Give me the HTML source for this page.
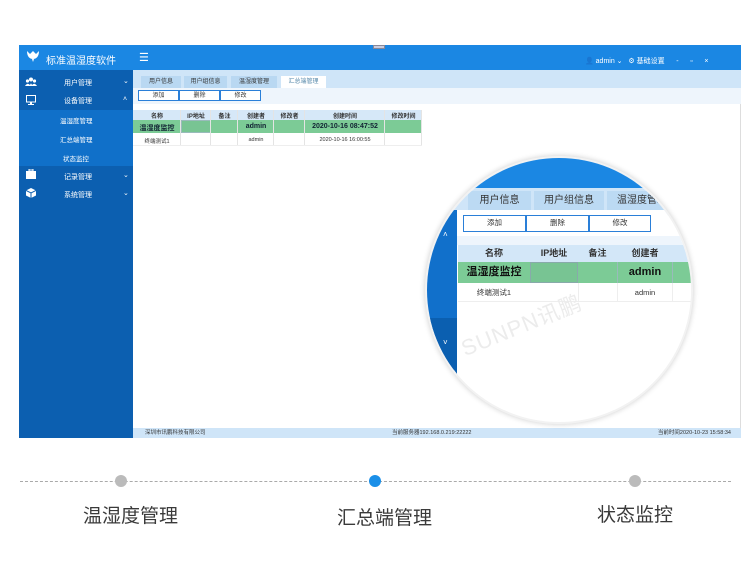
<!DOCTYPE html>
<html><head><meta charset="utf-8"><style>
*{margin:0;padding:0;box-sizing:border-box}
body{width:750px;height:563px;background:#fff;font-family:"Liberation Sans","Noto Sans CJK SC",sans-serif;position:relative;overflow:hidden;color:#333}
.a{position:absolute}
.t{font-size:6px;text-align:center}
.c{border-right:1px solid #e4e4e4;height:100%}
</style></head><body>
<!-- app -->
<div class="a" style="left:19px;top:45px;width:722px;height:393px;background:#fff;border-right:1px solid #ddd"></div>
<div class="a" style="left:19px;top:45px;width:722px;height:25px;background:#1b87e3"></div>
<div class="a" style="left:373px;top:45px;width:12px;height:4px;background:#ccd;border:1px solid #889"></div>
<svg class="a" style="left:26px;top:50px" width="14" height="13" viewBox="0 0 14 13"><path d="M1 1 C1 7 4 9 7 9 C10 9 13 7 13 1 L10 4 L7 1 L4 4 Z M6 9 L7 12 L8 9Z" fill="#fff"/></svg>
<div class="a" style="left:46px;top:52px;color:#fff;font-size:10px">标准温湿度软件</div>
<div class="a" style="left:139px;top:51px;color:#fff;font-size:11px">☰</div>
<div class="a" style="left:585px;top:56px;color:#fff;font-size:7px">👤 admin ⌄ &nbsp; ⚙ 基础设置 &nbsp;&nbsp;&nbsp;&nbsp; - &nbsp;&nbsp;&nbsp;&nbsp; ▫ &nbsp;&nbsp;&nbsp;&nbsp; ×</div>
<!-- sidebar -->
<div class="a" style="left:19px;top:70px;width:114px;height:368px;background:#0c5fb0"></div>
<div class="a" style="left:19px;top:110px;width:114px;height:56px;background:#1070c9"></div>
<svg class="a" style="left:25px;top:77px" width="12" height="9"><circle cx="6" cy="2.5" r="2" fill="#fff"/><circle cx="2.5" cy="4" r="1.6" fill="#fff"/><circle cx="9.5" cy="4" r="1.6" fill="#fff"/><path d="M0 9 Q2.5 5 5 8 Q6 5 7 8 Q9.5 5 12 9Z" fill="#fff"/></svg>
<svg class="a" style="left:26px;top:95px" width="10" height="10"><rect x="0.5" y="0.5" width="9" height="6.5" fill="none" stroke="#fff"/><rect x="4" y="7" width="2" height="2" fill="#fff"/><rect x="2" y="9" width="6" height="1" fill="#fff"/></svg>
<svg class="a" style="left:26px;top:169px" width="10" height="10"><rect x="0" y="2" width="10" height="8" fill="#fff"/><rect x="3" y="0" width="4" height="2" fill="none" stroke="#fff"/></svg>
<svg class="a" style="left:26px;top:188px" width="10" height="10"><path d="M5 0 L10 2.5 V7.5 L5 10 L0 7.5 V2.5Z" fill="#fff"/><path d="M5 5 V10 M0 2.5 L5 5 L10 2.5" stroke="#0c5fb0" fill="none"/></svg>
<div class="a" style="left:19px;top:74px;width:114px;height:16px;color:#fff;font-size:7px"><span class="a" style="left:45px;top:4px">用户管理</span><span class="a" style="left:104px;top:3px">⌄</span></div>
<div class="a" style="left:19px;top:92px;width:114px;height:16px;color:#fff;font-size:7px"><span class="a" style="left:45px;top:4px">设备管理</span><span class="a" style="left:104px;top:4px">˄</span></div>
<div class="a" style="left:60px;top:115px;color:#fff;font-size:6.5px">温湿度管理</div>
<div class="a" style="left:60px;top:134px;color:#fff;font-size:6.5px">汇总端管理</div>
<div class="a" style="left:63px;top:153px;color:#fff;font-size:6.5px">状态监控</div>
<div class="a" style="left:19px;top:170px;width:114px;height:16px;color:#fff;font-size:7px"><span class="a" style="left:45px;top:2px">记录管理</span><span class="a" style="left:104px;top:1px">⌄</span></div>
<div class="a" style="left:19px;top:188px;width:114px;height:16px;color:#fff;font-size:7px"><span class="a" style="left:45px;top:2px">系统管理</span><span class="a" style="left:104px;top:1px">⌄</span></div>
<!-- tabs -->
<div class="a" style="left:133px;top:70px;width:608px;height:18px;background:#cfe5f8"></div>
<div class="a t" style="left:141px;top:76px;width:40px;height:12px;background:#b9d8f2;line-height:12px">用户信息</div>
<div class="a t" style="left:184px;top:76px;width:43px;height:12px;background:#b9d8f2;line-height:12px">用户组信息</div>
<div class="a t" style="left:231px;top:76px;width:46px;height:12px;background:#b9d8f2;line-height:12px">温湿度管理</div>
<div class="a t" style="left:281px;top:76px;width:45px;height:12px;background:#fff;line-height:12px;color:#58a">汇总端管理</div>
<div class="a" style="left:133px;top:88px;width:608px;height:16px;background:#eef5fc"></div>
<div class="a t" style="left:138px;top:90px;width:41px;height:11px;border:1px solid #2a7fd8;background:#fff;line-height:10px">添加</div>
<div class="a t" style="left:179px;top:90px;width:41px;height:11px;border:1px solid #2a7fd8;background:#fff;line-height:10px">删除</div>
<div class="a t" style="left:220px;top:90px;width:41px;height:11px;border:1px solid #2a7fd8;background:#fff;line-height:10px">修改</div>
<!-- table -->
<div class="a" style="left:133px;top:110px;width:289px;height:10px;background:#d6e8f8"></div>
<div class="a" style="left:133px;top:120px;width:289px;height:13px;background:#7ccb96"></div>
<div class="a" style="left:181px;top:120px;width:30px;height:13px;background:#78c493;border:1px solid #9bb"></div>
<div class="a" style="left:133px;top:110px;width:289px;height:36px;border-bottom:1px solid #eee;display:flex">
 <div class="c" style="width:48px"></div><div class="c" style="width:30px"></div><div class="c" style="width:27px"></div><div class="c" style="width:36px"></div><div class="c" style="width:31px"></div><div class="c" style="width:80px"></div><div class="c" style="width:37px"></div></div>
<div class="a t" style="left:133px;top:111px;width:48px;font-weight:bold">名称</div>
<div class="a t" style="left:181px;top:111px;width:30px;font-weight:bold">IP地址</div>
<div class="a t" style="left:211px;top:111px;width:27px;font-weight:bold">备注</div>
<div class="a t" style="left:238px;top:111px;width:36px;font-weight:bold">创建者</div>
<div class="a t" style="left:274px;top:111px;width:31px;font-weight:bold">修改者</div>
<div class="a t" style="left:305px;top:111px;width:80px;font-weight:bold">创建时间</div>
<div class="a t" style="left:385px;top:111px;width:37px;font-weight:bold">修改时间</div>
<div class="a t" style="left:133px;top:123px;width:48px;font-size:7px;font-weight:bold;color:#123">温湿度监控</div>
<div class="a t" style="left:238px;top:123px;width:36px;font-size:7px;font-weight:bold;color:#123">admin</div>
<div class="a t" style="left:305px;top:123px;width:80px;font-size:7px;font-weight:bold;color:#123">2020-10-16 08:47:52</div>
<div class="a t" style="left:133px;top:137px;width:48px;font-size:5.5px">终端测试1</div>
<div class="a t" style="left:238px;top:137px;width:36px;font-size:5.5px">admin</div>
<div class="a t" style="left:305px;top:137px;width:80px;font-size:5.5px">2020-10-16 16:00:55</div>
<!-- footer -->
<div class="a" style="left:133px;top:428px;width:608px;height:10px;background:#cfe5f8;font-size:5.5px;line-height:10px"><span class="a" style="left:12px">深圳市讯鹏科技有限公司</span><span class="a" style="left:259px">当前服务器192.168.0.219:22222</span><span class="a" style="right:10px">当前时间2020-10-23 15:58:34</span></div>
<!-- magnifier -->
<div class="a" style="left:425px;top:156px;width:268px;height:268px;border-radius:50%;overflow:hidden;background:#fff;box-shadow:0 0 6px rgba(0,0,0,.2);border:2px solid #f2f2f2">
 <div class="a" style="left:0;top:0;width:268px;height:30px;background:#1b87e3"></div>
 <div class="a" style="left:0;top:30px;width:268px;height:28px;background:#cfe5f8"></div>
 <div class="a" style="left:0;top:52px;width:30px;height:160px;background:#1170cb"></div>
 <div class="a" style="left:0;top:160px;width:30px;height:60px;background:#0b5fb0"></div>
 <div class="a" style="left:16px;top:72px;color:#fff;font-size:8px">˄</div>
 <div class="a" style="left:16px;top:180px;color:#fff;font-size:8px">˅</div>
 <div class="a" style="left:30px;top:52px;width:240px;height:200px;background:#fff"></div>
 <div class="a" style="left:41px;top:33px;width:63px;height:19px;background:#bcdaf3;font-size:10px;text-align:center;line-height:19px">用户信息</div>
 <div class="a" style="left:107px;top:33px;width:70px;height:19px;background:#bcdaf3;font-size:10px;text-align:center;line-height:19px">用户组信息</div>
 <div class="a" style="left:180px;top:33px;width:90px;height:19px;background:#bcdaf3;font-size:10px;line-height:19px;padding-left:10px">温湿度管理</div>
 <div class="a" style="left:36px;top:57px;width:63px;height:17px;border:1.5px solid #2a7fd8;font-size:7.5px;text-align:center;line-height:14px">添加</div>
 <div class="a" style="left:99px;top:57px;width:63px;height:17px;border:1.5px solid #2a7fd8;font-size:7.5px;text-align:center;line-height:14px">删除</div>
 <div class="a" style="left:162px;top:57px;width:62px;height:17px;border:1.5px solid #2a7fd8;font-size:7.5px;text-align:center;line-height:14px">修改</div>
 <div class="a" style="left:30px;top:78px;width:240px;height:9px;background:#eef5fc"></div>
 <div class="a" style="left:31px;top:87px;width:240px;height:17px;background:#d3e7f8;font-size:9px;font-weight:bold;line-height:17px">
  <span class="a" style="left:0;width:72px;text-align:center">名称</span><span class="a" style="left:72px;width:48px;text-align:center">IP地址</span><span class="a" style="left:120px;width:39px;text-align:center">备注</span><span class="a" style="left:159px;width:56px;text-align:center">创建者</span></div>
 <div class="a" style="left:31px;top:104px;width:240px;height:21px;background:#7ccb96;font-size:11px;font-weight:bold;line-height:21px;color:#111">
  <span class="a" style="left:0;width:72px;text-align:center">温湿度监控</span><span class="a" style="left:72px;top:0;width:48px;height:21px;border:1px solid #8aa;background:#78c493"></span><span class="a" style="left:159px;top:0;width:56px;height:21px;border-left:1px solid #9bb;border-right:1px solid #9bb;text-align:center">admin</span></div>
 <div class="a" style="left:31px;top:125px;width:240px;height:19px;border-bottom:1px solid #eee;font-size:7.5px;line-height:19px">
  <span class="a" style="left:0;width:72px;text-align:center">终端测试1</span><span class="a" style="left:120px;height:19px;border-left:1px solid #eee;width:39px"></span><span class="a" style="left:159px;width:56px;height:19px;border-left:1px solid #eee;border-right:1px solid #eee;text-align:center">admin</span></div>
 <div class="a" style="left:30px;top:150px;color:#ececec;font-size:22px;transform:rotate(-22deg);letter-spacing:1px">SUNPN讯鹏</div>
</div>
<!-- steps -->
<div class="a" style="left:20px;top:481px;width:711px;border-top:1px dashed #aaa"></div>
<div class="a" style="left:115px;top:475px;width:12px;height:12px;border-radius:50%;background:#bbb"></div>
<div class="a" style="left:369px;top:475px;width:12px;height:12px;border-radius:50%;background:#1a8fe8"></div>
<div class="a" style="left:629px;top:475px;width:12px;height:12px;border-radius:50%;background:#bbb"></div>
<div class="a" style="left:83px;top:501px;font-size:19px;color:#3a3a3a">温湿度管理</div>
<div class="a" style="left:337px;top:503px;font-size:19px;color:#3a3a3a">汇总端管理</div>
<div class="a" style="left:597px;top:500px;font-size:19px;color:#3a3a3a">状态监控</div>
</body></html>
